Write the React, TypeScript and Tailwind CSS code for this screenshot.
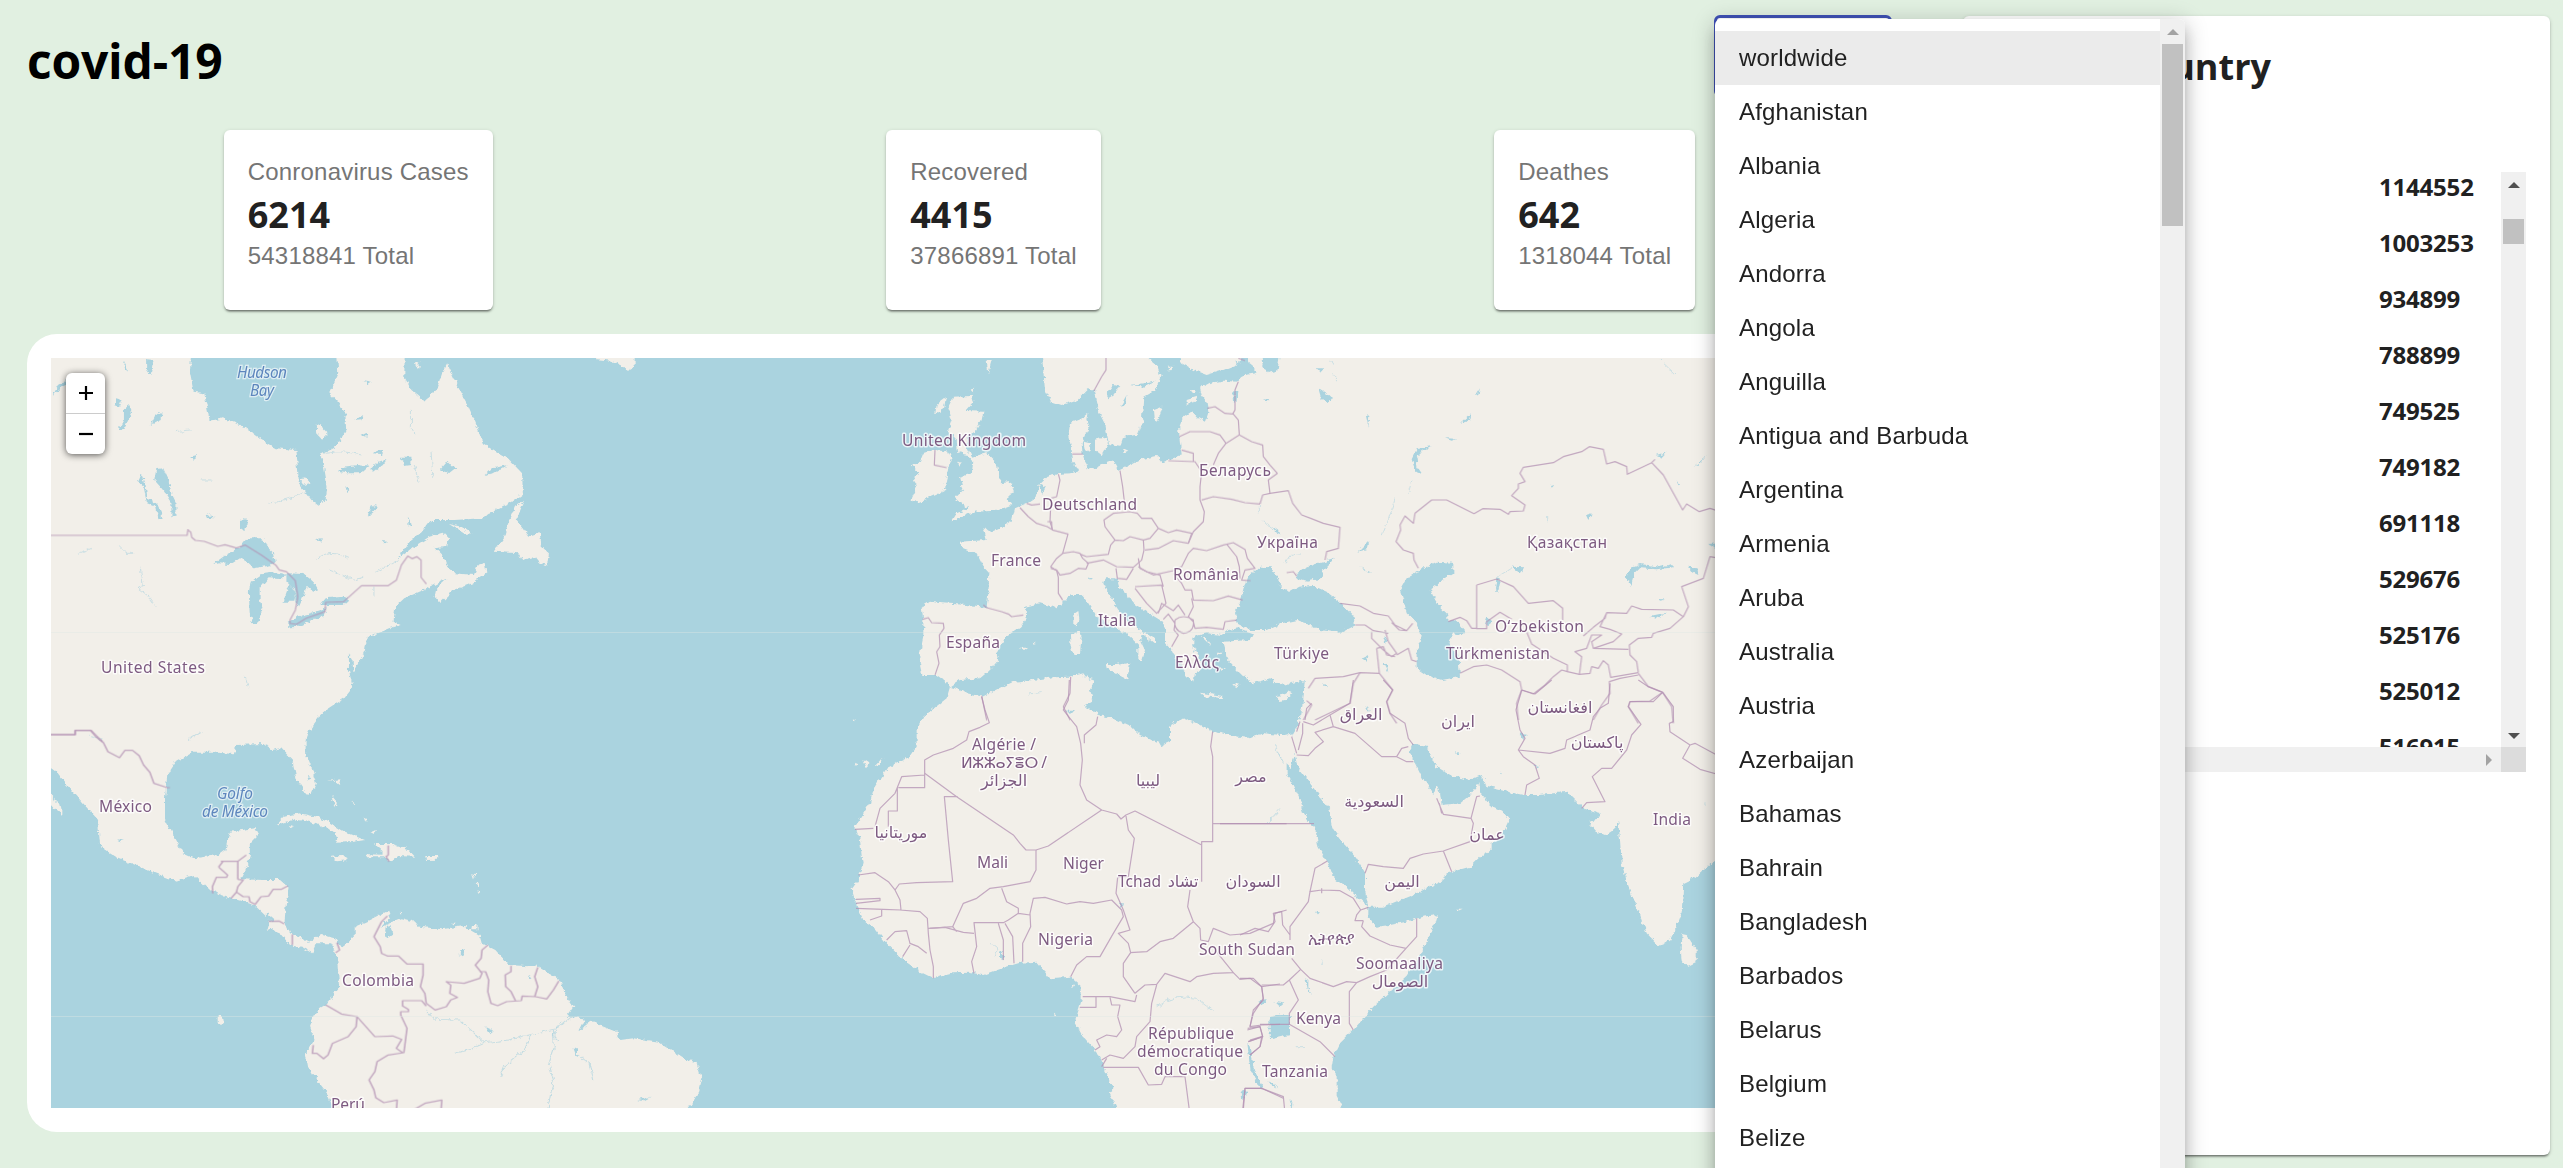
import React from "react";

const countries = [
  "worldwide", "Afghanistan", "Albania", "Algeria", "Andorra", "Angola", "Anguilla",
  "Antigua and Barbuda", "Argentina", "Armenia", "Aruba", "Australia", "Austria",
  "Azerbaijan", "Bahamas", "Bahrain", "Bangladesh", "Barbados", "Belarus", "Belgium",
  "Belize",
];

const cases = [
  "1144552", "1003253", "934899", "788899", "749525", "749182",
  "691118", "529676", "525176", "525012", "516915",
];

const stats = [
  { title: "Conronavirus Cases", today: "6214", total: "54318841 Total" },
  { title: "Recovered", today: "4415", total: "37866891 Total" },
  { title: "Deathes", today: "642", total: "1318044 Total" },
];

type Region = { at: string; land: string[]; water: string[]; borders: string[]; streams?: string[] };

const northAmerica: Region = {
  at: "translate(40 340) scale(.35714 .33333)",
  land: [
    "M-20 0H425L420 100 430 155 460 160 475 242 515 235 570 260 620 300 660 325 718 330 722 380 725 430 760 480 780 497 800 480 805 440 795 380 785 345 830 320 857 270 855 215 830 180 810 160 835 100 830 0H1022L1020 110 1040 150 1075 182 1110 150 1125 100 1140 70 1165 130 1200 200 1220 250 1240 310 1310 355 1350 400 1352 460 1320 485 1280 505 1240 535 1160 540 1095 540 1070 575 1030 610 1000 660 1040 625 1090 590 1130 578 1145 595 1140 620 1105 625 1130 650 1140 680 1160 700 1215 705 1225 675 1245 668 1250 700 1210 730 1160 750 1120 790 1105 770 1110 745 1140 715 1085 745 1020 775 995 800 990 845 1010 855 980 865 935 885 915 895 910 930 890 975 878 1000 875 960 865 940 865 990 875 1040 850 1075 800 1110 760 1150 740 1210H-20Z",
    "M1355 485L1330 500 1310 550 1300 590 1270 635 1340 640 1350 660 1385 650 1400 670 1420 675 1425 640 1405 620 1400 580 1370 590 1350 560 1335 540 1345 510Z",
    "M1145 552L1180 560 1208 580 1190 582Z",
    "M1530 0H1665V80L1645 92 1630 78 1600 62 1560 58Z",
    "M1050 70L1062 66 1058 88Z",
    "M728 418L745 415 758 430 740 434Z",
    "M775 250L790 262 805 280 790 296 776 280Z",
  ],
  water: [
    "M325 388L345 385 360 420 368 460 382 490 382 530 368 532 368 490 345 450 320 420Z",
    "M285 400L295 430 300 470 325 490 335 500 342 535 332 538 325 500 300 490 290 440 275 425Z",
    "M560 540L575 538 582 555 572 570 560 562Z",
    "M485 672L520 645 560 620 580 595 625 595 635 620 655 640 660 665 650 675 600 685 580 665 560 655 535 672 500 670Z",
    "M585 755L590 725 620 703 660 697 690 705 680 715 640 712 615 745 615 780 625 810 612 850 595 853 587 820Z",
    "M690 700L740 702 765 725 778 750 765 755 745 735 740 765 725 800 715 790 715 750 690 725Z",
    "M682 785L700 730 715 760 712 785Z",
    "M695 850L720 830 760 820 800 805 795 825 760 840 725 860 700 862Z",
    "M785 795L800 775 850 770 865 780 850 795Z",
    "M220 270L235 240 235 205 250 195 258 215 245 245 232 270Z",
    "M35 165L50 135 90 110 120 100 100 120 60 145Z",
    "M300 58L318 60 310 105 300 90Z", "M235 62L250 95 238 85Z", "M210 175L228 180 222 200 210 195Z",
    "M310 255L322 230 340 215 338 240Z",
    "M835 395L850 380 890 375 920 380 900 400 860 400Z",
    "M925 385L945 365 970 360 960 375 935 395Z", "M930 340L960 328 955 342Z",
    "M1010 350L1040 350 1040 375 1020 378Z", "M1120 390L1140 365 1150 375 1168 380 1145 400Z",
    "M1245 405L1265 385 1310 375 1270 400Z", "M918 530L925 500 945 492 935 515Z",
    "M900 285L912 278 915 290Z", "M880 240L905 222 900 238Z", "M900 122L930 128 918 130Z",
    "M1030 530L1040 550 1032 560Z", "M770 597L790 595 785 605Z", "M855 435L866 450 860 460Z", "M957 600L972 602 965 610Z",
    "M420 350L440 345 430 362Z", "M465 520L490 535 470 534Z",
  ],
  borders: [
    "M20 586H412L414 570 422 576 425 592 435 601 460 604 498 619 518 614 550 624 575 615 620 645 660 675 670 690 690 695 715 722 722 770 715 810 700 840 700 850 718 853 745 835 798 815 800 787 850 785 900 737 975 737 998 720 1012 675 1030 648 1042 656 1055 650 1067 660 1067 712 1082 732",
    "M20 1184H98V1171H143L175 1205",
  ],
  streams: [
    "M280 680L290 740 275 745 300 765 325 803", "M220 618L240 640 265 640", "M108 640L145 625",
    "M935 740V770", "M940 697L1000 660", "M1040 210V260L1050 280", "M1045 375L1062 425", "M1095 335L1100 410",
    "M775 655Q815 625 865 655", "M810 690L880 720 905 712", "M640 490Q700 480 740 455", "M575 1010L585 1045",
    "M800 340Q850 330 900 345", "M450 420H480", "M380 275L420 270",
  ],
};

const centralAmerica: Region = {
  at: "translate(40 720) scale(.44643 .33333)",
  land: [
    "M-10 -10H625L595 45 595 100 610 150 618 190 608 222 595 220 575 180 565 120 540 85 520 90 500 72 440 75 435 100 400 95 345 95 305 125 285 165 280 230 280 300 300 350 320 400 345 415 400 405 415 390 425 335 480 325 488 345 470 370 470 410 460 450 450 478 500 480 540 480 557 500 550 560 548 605 560 640 600 665 630 645 660 655 675 685 705 650 705 620 740 600 780 572 785 590 765 620 810 595 840 605 850 620 900 628 950 618 985 645 990 670 1020 690 1050 735 1115 740 1170 785 1175 820 1195 860 1180 890 1220 895 1205 935 1235 905 1290 935 1300 960 1330 955 1385 965 1450 1020 1470 1025 1483 1080 1475 1120 1440 1190H665L640 1110 600 1040 595 1000 615 960 605 920 620 870 645 850 670 800 668 760 665 705 650 670 620 670 610 700 590 685 560 675 545 645 510 625 515 600 480 555 430 535 385 515 345 465 305 482 250 455 170 410 135 380 130 300 90 240 60 195 40 160 25 145-10 130Z",
    "M20 205L35 245 50 260 50 285 30 265 15 240Z",
    "M528 315L545 290 580 280 620 290 650 310 680 335 728 360 700 366 665 368 670 350 640 320 600 305 570 298Z",
    "M748 372L790 372 825 388 840 410 800 408 785 425 770 412 728 412 735 403 765 404 765 390Z",
    "M652 410L675 408 690 420 665 424Z", "M863 408H892V419L865 420Z", "M560 315L568 318 564 328Z",
    "M652 225L665 245 662 262Z", "M640 182L675 178 672 195 660 182Z", "M968 615H980V628H966Z",
    "M398 885L410 890 412 910 398 912Z", "M738 338L752 330 750 342Z", "M968 460L975 462 972 475Z",
    "M976 485L984 487 980 500Z", "M980 510L986 515 982 522Z", "M806 578L812 580 810 588Z",
    "M698 240L706 255 702 258Z", "M725 290L732 300 728 304Z", "M920 608L934 608 926 614Z",
  ],
  water: [
    "M775 620L785 618 790 645 780 655 772 640Z", "M942 690L952 688 948 712 940 708Z",
    "M508 580L525 600 518 605 508 592Z", "M598 168L606 172 602 182Z", "M170 358L188 360 180 364Z",
    "M1195 985L1203 990 1202 1010Z", "M1340 1140L1368 1130 1350 1144Z", "M1095 765L1102 770 1096 776Z",
    "M995 920L1015 932 1008 940Z",
  ],
  borders: [
    "M-10 44H79V31H113L125 50 142 68 152 95 178 113 190 91 207 91 222 107 232 135 246 157 255 190 285 203H291",
    "M405 424H443M443 424V478M443 424L462 405M400 441L410 424M400 441L420 465 418 472H395L386 500 387 520M443 478L455 480 443 500 440 516 428 535",
    "M440 516L455 530 468 530 470 545 482 553 495 530 512 528 522 508 540 508 555 498",
    "M512 604L535 603 547 612M565 643V675M665 668L671 690 662 698",
    "M780 376V405L775 410 782 425",
    "M778 588L765 605 748 650 762 680 765 700 778 708H803L822 732H858V765L852 800 862 820 865 850 885 870 910 860 920 840 935 832 918 820 920 795 910 785 950 790 985 775 990 760 975 735 988 715 990 690 1003 675",
    "M985 755H998L1005 780 1003 815 1010 850 1025 857 1045 845 1078 842 1080 828 1110 830 1135 837 1150 810 1162 783",
    "M1055 738V755L1042 765 1043 800 1055 815 1065 842M1115 742L1108 770 1115 800 1108 830",
    "M640 855L675 882 710 890 708 920 690 950 655 970 645 1005 635 1016 620 1000H610L612 975M710 890L750 950 790 948 810 958 798 985 812 998M865 858L855 842H812L812 858 825 868 825 875H808L808 885 822 925 815 998 780 1005 755 1025 750 1055 737 1080 748 1110 752 1133 770 1148 800 1140 798 1175M830 1175L862 1150 900 1140 898 1175",
  ],
  streams: [
    "M865 870L880 898 940 900 965 930 995 968 1050 960 1110 940 1160 925 1195 885", "M1150 930L1152 985 1140 1030 1150 1080 1138 1163",
    "M930 1000L960 990 995 970", "M1100 945L1085 990 1040 1040 1032 1070", "M1165 905L1150 945 1160 960",
    "M1200 1000L1230 1030 1238 1080", "M330 60L360 35", "M110 45L140 60",
  ],
};

const europe: Region = {
  at: "translate(840 340) scale(.33333)",
  land: [
    "M1460 0H1220V54L1235 80 1250 95 1215 100 1190 125 1150 122 1110 128 1080 145 1085 165 1100 185 1105 215 1095 245 1075 235 1055 212 1030 230 1018 260 1018 290 1022 325 1025 345 985 360 965 368 950 348 905 358 870 375 850 385 835 392 820 362 790 372 765 385 740 385 728 345 725 310 735 285 748 260 742 240 745 218 722 238 690 250 685 290 695 330 700 365 715 395 690 400 655 402 620 410 600 430 590 470 560 490 525 505 515 545 490 560 470 570 445 575 430 560 440 600 405 602 360 605 370 625 410 640 430 680 448 700 445 760 440 800 380 795 310 790 270 785 245 800 250 840 250 890 238 950 250 1005 290 1005 310 1020 330 1040 360 1020 420 1015 450 990 475 960 470 940 495 890 540 860 560 835 555 800 600 790 650 805 690 765 725 765 745 790 770 830 800 850 840 870 870 890 895 915 895 960 905 965 915 930 900 900 905 880 945 912 945 897 900 870 870 850 830 810 820 780 800 755 790 730 800 715 828 715 835 740 860 760 880 790 920 815 960 840 975 865 975 910 1000 935 1010 960 1030 985 1040 1010 1060 1025 1065 1000 1085 990 1080 960 1060 920 1060 890 1100 880 1145 885 1165 870 1195 865 1240 880 1230 900 1150 905 1165 960 1200 1000 1240 1030 1290 1015 1330 1035 1395 1020H1460Z",
    "M600 0L608 70 615 150 635 185 665 195 710 180 745 145 762 150 770 200 795 250 808 315 840 320 850 290 890 285 905 250 910 170 945 150 962 110 950 75 925 54V0Z",
    "M1010 0L1025 70 1060 90 1100 105 1150 90 1200 70 1215 0Z",
    "M340 170L395 168 400 185 375 213 430 215 425 240 405 275 385 285 380 320 395 350 440 340 470 370 475 400 485 430 510 425 522 445 500 480 515 495 470 512 400 515 380 525 335 545 350 520 385 505 345 475 370 450 360 410 395 400 400 365 385 345 355 340 350 300 325 270 335 240 325 200Z",
    "M215 375L240 365 250 340 285 330 325 335 335 355 325 380 320 410 315 450 285 465 235 487 212 480 230 440 220 410 240 400Z",
    "M300 185L318 172 312 205 285 225 290 195Z", "M440 60L455 60 445 100Z", "M392 150L402 140 402 160Z",
    "M700 820L715 810 718 840 710 862 700 850Z", "M690 885L715 870 725 885 720 940 700 945 692 920Z",
    "M798 975L830 975 870 968 862 1018 830 1000 800 985Z", "M1080 1058L1150 1068 1148 1075 1090 1068Z",
    "M1308 1070L1330 1065 1358 1050 1335 1080 1315 1082Z", "M942 210L968 200 955 240 945 245Z", "M900 235L912 240 898 275Z",
    "M730 305L750 310 752 335 735 330Z", "M765 300L798 290 805 310 785 345 765 330Z", "M850 325L865 332 850 338Z",
    "M1040 180L1072 170 1065 185 1040 192Z", "M1050 150L1068 150 1055 162Z", "M980 80L1000 80 990 92Z",
    "M540 920L565 920 550 932Z", "M575 908L588 912 578 915Z", "M355 365L366 368 358 380Z",
    "M1085 890L1100 895 1115 915 1100 905Z", "M1130 935L1145 935 1135 945Z", "M1140 980L1158 985 1145 990Z",
    "M1110 965L1120 975 1112 980Z", "M1180 1030L1200 1035 1188 1045Z", "M1100 940L1110 950 1100 952Z",
    "M1060 950L1085 970 1080 985Z",
  ],
  water: [
    "M798 165L820 135 838 140 820 165 805 175Z", "M840 200L860 165 855 195Z", "M870 135L945 125 915 140Z",
    "M1180 150L1192 150 1190 185 1182 188Z", "M1270 180L1285 180 1280 190Z", "M600 430L618 440 605 465Z",
    "M675 1112L705 1112 700 1118Z", "M745 710L755 712 750 720Z",
  ],
  borders: [
    "M798 40V90L785 110 762 152",
    "M285 330L283 375 320 383M248 838L265 833 275 848 310 850 312 865 298 885 300 920 290 935 297 970 285 1005",
    "M430 795L440 803 485 815 505 822 515 830 550 825M655 402L660 420 650 470 633 475 630 545 638 570 684 582 668 640 650 655 632 680 650 692 655 712 655 760 668 780",
    "M560 490L575 495 600 492M540 503L565 530 590 550 622 560 638 570M622 545L635 545 636 570",
    "M632 685L650 690 660 705 690 700 715 685 738 687 745 670 728 655 720 640 700 635 668 640",
    "M720 642L740 650 805 643 812 615 825 600 795 560 792 540 820 520 870 515 892 520 905 535 935 535 955 565 930 595 910 600 870 590 850 602 825 600",
    "M840 392L848 440 852 475 855 490M740 670L790 660 830 680 880 682 905 660 912 630 910 600",
    "M955 565L985 578 1010 570 1055 580 1045 610 1000 602 955 625 915 630M895 655L900 685 940 705 1000 692 1025 680 1045 640 1060 625 1100 632 1150 615 1180 608 1215 628 1222 655 1245 685 1215 690 1205 720 1232 722",
    "M1160 612L1190 650 1198 680 1200 715M1045 610L1060 575 1090 545 1093 515 1080 480 1080 440 1085 395 1065 365 985 362M1060 365L1060 340 1025 330",
    "M1085 480L1120 470 1175 478 1215 488 1260 492M1018 290L1050 275 1110 275 1140 285 1158 310 1135 340 1120 375",
    "M1158 310L1198 285 1195 240 1180 222 1155 220 1125 200 1102 205M1195 125L1185 150 1185 210 1178 222",
    "M828 685L832 715 860 718 880 685M885 740L965 735 978 790 950 820 920 790 885 745M895 680L920 695 960 705 970 740M1000 700L1025 730 1035 750 1055 750 1060 780 1120 782 1165 768 1208 780",
    "M1055 775L1060 800 1045 830 1060 845 1065 865 1100 862 1150 868 1155 845 1190 840M1005 840Q1030 820 1060 840Q1065 875 1030 880Q1000 870 1005 840M955 820L965 790 1000 812 1015 795 1035 825M970 838L985 822 1005 850 1002 870 1015 885 995 920",
    "M1195 54L1215 62M692 1010L690 1060 670 1100 690 1140M425 1068L440 1140M697 342H728M1198 285L1235 305 1268 315 1270 350 1290 375 1312 400 1285 420 1290 460",
    "M1340 698L1360 695 1370 708",
  ],
};

const asia: Region = {
  at: "translate(1240 340) scale(.33333)",
  land: ["M100 0H1560V1160H190L200 1080 205 1015 160 1025 100 1030Z"],
  water: [
    "M62 30H122L112 92 80 100 68 75Z", "M-10 60L15 85 48 100 0 108Z", "M230 85L250 85 240 95Z",
    "M235 145L262 162 275 175 265 190 245 180Z", "M378 228L388 225 385 260Z", "M70 178L88 180 80 190Z",
    "M515 355L530 325 575 318 545 335 530 355 532 380 545 400 530 402Z", "M615 295L650 296 635 302Z",
    "M705 168L720 145 715 165Z", "M660 252L695 220 690 240Z", "M355 635L385 605 380 628Z", "M360 682L395 698 380 695Z",
    "M-15 815L0 790 10 750 20 715 60 680 95 682 110 712 130 740 150 755 175 740 215 735 260 755 310 795 340 825 345 855 300 878 240 870 200 850 170 840 120 850 80 870 30 870-10 850Z",
    "M165 705L200 680 245 665 285 653 250 690 245 715 200 725 175 718Z",
    "M540 690L590 665 640 668 640 700 600 725 570 745 580 770 600 800 625 825 625 845 650 840 675 870 665 885 640 880 625 905 655 945 660 1010 605 1020 560 1005 530 985 530 930 545 890 530 850 500 820 490 780 480 750 500 715Z",
    "M1160 710L1175 680 1200 672 1260 680 1300 672 1305 682 1250 688 1200 685 1180 705 1175 738Z",
    "M1345 680L1372 682 1375 705 1355 695Z", "M1230 828L1278 818 1255 835Z", "M768 752L772 715 782 720 775 752Z",
    "M815 680L850 682 838 698Z", "M735 850L742 830 758 845 745 855Z", "M365 955L385 945 380 965Z",
    "M430 970L440 968 445 998Z", "M1038 525L1055 520 1045 540Z", "M1250 345L1280 335 1265 352Z", "M1357 382L1405 345 1380 368Z",
    "M1250 777L1275 778 1262 782Z", "M1310 420L1322 432 1316 436Z", "M100 565L125 582 110 580Z", "M430 890L442 900 436 908Z",
    "M250 1030L265 1045 250 1040Z", "M930 435L940 432 932 442Z", "M1405 612L1440 610 1430 630Z",
  ],
  borders: [
    "M60 492L68 465 90 460 145 452 158 490 185 525 212 535 250 550 300 562 295 625 260 635 255 660",
    "M300 790L360 798 400 820 445 828 465 855 500 872 518 850M345 855H375L400 872 445 880M395 875V895L430 930 455 950 470 940 445 905 435 870M455 848L478 870 500 872M470 945L505 925 515 960 530 965M410 925L418 1000 360 998 310 1010 225 1015 205 1045M410 925L430 920 440 945 465 950",
    "M535 685L522 660 520 640 490 630 468 605 482 570 480 555 495 528 520 550 525 520 575 480H620L702 521 728 506 780 508 805 523 810 515 850 513 855 495 815 467 835 445 835 432 855 425 840 400 850 382 940 368 970 350 1025 335 1048 320 1090 328 1100 372 1125 365 1160 380 1162 403 1235 368 1270 405 1328 510 1340 492 1378 515 1410 505 1440 515",
    "M1245 358L1235 368M1440 655L1410 650 1390 715 1325 740 1345 800 1330 830 1290 865 1240 880 1235 892 1195 895 1168 915 1170 945 1190 965 1195 998",
    "M1330 830L1300 810 1205 808 1175 798 1160 820 1100 818 1095 835 1060 862 1030 888M1100 818L1080 860 1110 868 1145 882 1120 905 1060 925 1055 905 1085 885 1055 885 1040 925 1005 935 1025 950 1018 1005M1165 928L1060 925",
    "M710 735L770 717 820 740 865 790 940 782 968 805V840M710 735V866H740V845L780 817 815 838M860 875L875 912 940 955 982 975V995L965 990 940 1010 915 1035 880 1062 845 1050",
    "M625 845L660 832 680 842 695 865H710M660 1000L700 980 740 975 785 990 840 1025 845 1050 830 1090 835 1140",
    "M982 995L1018 1003 1050 1000 1055 980 1075 985 1090 962 1105 975 1112 1012 1195 998",
    "M1195 1005L1140 1015 1108 1025 1110 1060 1085 1095 1060 1140M1195 1000L1225 1040 1268 1057 1230 1083 1170 1085 1165 1100 1195 1150M1268 1057L1295 1100 1300 1150",
    "M418 1000L458 1050 440 1085 450 1120 470 1150M360 998L340 1030 330 1090 225 1140M190 1140L215 1095 200 1082",
  ],
  streams: ["M515 425L505 458", "M465 475L445 540 425 590", "M58 495V520M65 540L120 580", "M135 670L155 645 180 642", "M775 710L815 685", "M1260 60L1305 102", "M270 60L280 75M275 100L292 122", "M920 530V550"],
};

const africa: Region = {
  at: "translate(820 680) scale(.33333)",
  land: [
    "M390 20L380 55 310 110 290 150 290 200 270 230 205 260 160 330 150 370 105 440 120 480 128 550 115 600 95 628 108 670 130 720 160 740 200 790 250 840 300 875 340 895 400 880 450 878 490 885 560 860 600 848 650 845 690 895 750 890 785 920 785 960 765 1025 790 1070 830 1115 850 1160 880 1230 870 1240 900 1310H1400V165H1380L1330 160 1285 178 1230 165 1180 155 1120 125 1090 115 1050 140 1050 185 1030 195 960 165 935 140 890 120 835 105 810 90 795 75 820 60 810 30 820-5 805 0 790-20 750-10 700-8 640 0 580 5 540 25 490 50 440 40 405 25Z",
    "M130 240L145 250 140 265Z", "M165 258L190 230 180 255Z", "M105 245L115 250 108 258Z", "M95 118L105 120 100 124Z", "M752 920L762 912 765 918Z", "M702 998L710 1002 704 1008Z",
  ],
  water: ["M735 92L765 94 750 98Z", "M540 815L548 810 550 838 540 835Z", "M1350 1010L1410 1005V1065L1352 1078Z", "M1318 960L1340 958 1325 975Z", "M1283 1090L1292 1100 1300 1160 1328 1225 1320 1225 1292 1170Z", "M1262 1250L1275 1230 1280 1235 1268 1260Z", "M900 668L912 670 905 682Z"],
  borders: [
    "M485 50L495 90 508 128 480 142 447 155 440 180 400 205 340 225 314 240V323H235M314 285L245 290 225 340 180 385 165 440M232 323V393H205V440M105 448L160 445",
    "M314 280L410 350 580 465 600 490 618 510H648L685 498 845 390M413 350H373L385 480 398 605 290 608 238 612 225 630",
    "M748 0L745 60 730 90 770 140 782 190 787 240 780 315 800 360 845 390 890 402 903 417 918 405 945 393 1145 495V605M1178 155L1172 200 1178 230V485H1145V495M1178 431H1400",
    "M833 110L828 135 793 165V190M648 510V570L630 605 550 620 510 625 470 655 430 670 398 740 330 745M918 408L925 450 943 475 925 590 893 592 888 640 910 690 930 750 895 760 925 790 932 818 910 850V890L945 940",
    "M115 585L165 578 205 605 225 630 240 660 243 690 190 688 108 685M108 658L180 655V662L108 670M150 720L185 708V690M240 690L300 695 322 715 325 760 330 810 340 860V895M325 745L375 742 430 757 462 760M398 740L410 755M200 780L225 755 260 752 270 790 295 800 320 820M270 795L248 830",
    "M462 880L455 845 470 800 462 728H550L565 720 595 700 630 705M545 625L560 665 595 685 595 700M535 730L550 780 550 840M555 730L578 770 582 850M630 700L632 740 608 790V845M630 700L640 655 675 652 740 672 780 665 820 670 875 660 905 690 910 710 880 760 840 830 800 830 770 855 752 890",
    "M930 818L980 815 1020 785 1060 775 1120 725 1140 745 1142 780 1165 785 1180 745 1230 765 1290 760 1360 730 1365 700 1400 690M1110 630L1103 680 1120 725M945 940L975 915 1010 913 1035 880 1110 905 1130 890 1180 880 1240 878 1185 810",
    "M1240 878L1260 898 1290 895 1325 920 1380 912M1325 920L1330 955 1300 1000 1290 1040 1325 1035 1380 1033M1290 1080L1325 1070 1320 1100 1290 1125M1283 1045L1320 1040 1328 1070 1285 1085",
    "M788 950H870L945 965 950 945M828 952V982H780M870 952L875 975 900 975 893 1010 905 1050 890 1070 860 1065 830 1080 840 1100 825 1110M1010 915L995 970 990 1025 950 1070 945 1100 910 1135 870 1125 845 1140M850 1162H955L985 1215 1025 1213 1035 1190H1095L1108 1290M1268 1290L1275 1225 1325 1225 1390 1255",
    "M845 1160L860 1135",
  ],
  streams: ["M1365 195L1390 250", "M510 790L535 810 525 830", "M1335 435L1375 400", "M1010 980Q1060 940 1130 955L1180 995", "M1350 1205L1370 1225", "M625 42L665 38"],
};

const arabia: Region = {
  at: "translate(1240 680) scale(.33333)",
  land: [
    "M195-10L190 60 180 110 170 145 155 170 163 215 172 260 210 310 240 350 270 390 275 440 310 490 345 530 375 580 375 630 385 680 430 680 480 660 530 640 610 600 620 580 690 560 720 530 755 510 755 490 790 460 808 420 790 395 750 375 725 345 718 310 690 345 660 370 605 375 600 340 590 318 580 345 565 320 545 290 525 250 510 210 520 190 560 200 590 260 640 290 690 300 725 285 740 320 780 330 850 345 900 345 980 335 1000 355 1030 385 1055 405 1085 400 1070 420 1045 425 1070 455 1095 465 1125 445 1135 425 1140 480 1145 550 1165 620 1200 700 1220 760 1260 800 1290 780 1310 740 1325 700 1330 610 1370 590 1430 535 1560 530V-10Z",
    "M-100 170H0L30 175 70 160 110 172 158 160 165 215 155 265 130 240 106 205 115 235 140 280 155 305 180 360 200 420 225 440 235 500 265 550 280 590 320 620 350 650 385 680 385 710 410 740 450 735 500 725 550 710 590 705 580 740 560 790 530 840 500 890 440 945 400 980 340 1050 300 1090 280 1130 275 1165 290 1180 290 1250 320 1310H-100Z",
    "M1325 762L1340 765 1370 810 1370 845 1345 857 1325 845 1322 800Z", "M645 686L668 686 655 692Z",
    "M108 48L130 45 158 35 135 60 115 62Z",
  ],
  water: [
    "M88 1020L110 1003 145 1010 150 1050 120 1065 90 1078Z", "M55 968L80 958 65 975Z", "M105 965L130 970 118 978Z", "M196 895L205 900 205 925 215 942 205 935Z",
    "M22 1090L32 1100 40 1160 68 1225 60 1225 32 1170Z", "M85 1200L105 1215 115 1225 95 1215Z", "M148 1258L160 1270 158 1290Z", "M5 1240L15 1230 12 1260Z",
    "M225 695L240 697 232 705Z", "M838 160L860 165 850 180Z", "M380 75L390 95 380 88Z", "M880 255L900 257 888 263Z", "M1030 385L1085 400 1060 415Z",
    "M780 272L790 275 784 280Z", "M645 208L662 222 652 222Z",
  ],
  borders: [
    "M190 125L220 135 270 105 330 70 340 0M270 105L280 140 345 160 425 230H470L500 245H520M470 230L485 205 505 200M280 140L225 157 250 185 225 205 205 227 170 225M188 130V160L175 210M170 155L180 125M155 170L170 220",
    "M215 70L200 85 195 120M430 0L458 30 440 65 450 100 495 130 505 175 520 195M375 580L385 553 430 560 490 565 510 535 550 522 610 513 690 485 700 430 693 415 610 403 590 355M610 513L635 575M693 415L710 350 720 348M598 370L605 400",
    "M835 210L850 230 885 255 898 295 860 315 855 345M845 30L828 90 840 150 855 175 835 210 930 220 975 205 980 180 1050 150 1060 110 1080 85 1105 70 1110 10M845 30L885 42 935 0M1268 37L1240 65 1170 65 1165 80 1203 133 1175 165 1160 210 1115 265H1085L1057 290 1095 365 1040 368 1025 385",
    "M1195 0L1225 20 1268 37 1300 80 1300 125 1288 130 1290 155 1350 195 1365 190 1440 230M1350 195L1328 235 1380 268 1440 285",
    "M-60 431H222M262 543L225 565 210 635 245 630 300 632 340 655 362 690 350 705 345 722H370M210 635L205 665 150 740 150 780M245 625L245 640M362 690L385 682M370 722L365 740 390 768 450 795 498 805 530 770V715M498 805L440 870 390 890 350 908 320 905 280 920 210 895 182 868 155 835M182 868L148 900 130 915 65 915M148 900L175 960 148 1000V1035M350 908L328 935V1030L340 1050M60 1033H148L240 1085 285 1130M0 765L45 745 85 755 105 725 100 700 125 695 128 735 150 765M0 895L40 895 65 920 70 960 40 990 30 1040M22 1050L60 1040 68 1070 25 1085M68 1070L60 1100 30 1125M10 1290L15 1225 65 1225 130 1250 135 1300",
  ],
  streams: ["M105 205L130 245M78 435L120 385", "M90 1205L110 1222", "M168 1100H195", "M245 855L250 840", "M1395 370V375"],
};

const regions: Region[] = [northAmerica, centralAmerica, europe, asia, africa, arabia];

// [text, left, baseline, width]
const labels: [string, number, number, number][] = [
  ["United States", 101, 673, 104],
  ["México", 99, 812, 53],
  ["Colombia", 342, 986, 72],
  ["Perú", 331, 1110, 34],
  ["United Kingdom", 902, 446, 124],
  ["Deutschland", 1042, 510, 95],
  ["France", 991, 566, 50],
  ["España", 946, 648, 54],
  ["Italia", 1098, 626, 38],
  ["România", 1173, 580, 66],
  ["Беларусь", 1199, 476, 72],
  ["Україна", 1257, 548, 61],
  ["Ελλάς", 1175, 668, 44],
  ["Türkiye", 1274, 659, 55],
  ["Қазақстан", 1527, 548, 80],
  ["Oʻzbekiston", 1495, 632, 89],
  ["Türkmenistan", 1446, 659, 104],
  ["Algérie /", 972, 750, 64],
  ["Mali", 977, 868, 31],
  ["Niger", 1063, 869, 41],
  ["Tchad", 1118, 887, 43],
  ["Nigeria", 1038, 945, 55],
  ["South Sudan", 1199, 955, 96],
  ["République", 1148, 1039, 86],
  ["démocratique", 1137, 1057, 106],
  ["du Congo", 1154, 1075, 73],
  ["Tanzania", 1262, 1077, 66],
  ["Kenya", 1296, 1024, 45],
  ["Soomaaliya", 1356, 969, 87],
  ["India", 1653, 825, 38],
  ["ⵍⵣⵣⴰⵢⴻⵔ /", 961, 768, 86],
  ["ኢትዮጵያ", 1308, 944, 47],
];

// [text, centre, baseline]
const arabicLabels: [string, number, number][] = [
  ["الجزائر", 1004, 786], ["ليبيا", 1148, 786], ["مصر", 1251, 782], ["موريتانيا", 901, 838],
  ["تشاد", 1183, 887], ["السودان", 1253, 887], ["العراق", 1361, 720], ["ايران", 1458, 727],
  ["افغانستان", 1560, 713], ["پاکستان", 1597, 748], ["السعودية", 1374, 807], ["عمان", 1487, 840],
  ["اليمن", 1402, 887], ["الصومال", 1400, 987],
];

const waterLabels: [string, number, number, number][] = [
  ["Hudson", 237, 378, 50],
  ["Bay", 250, 396, 24],
  ["Golfo", 217, 799, 36],
  ["de México", 202, 817, 66],
];

function WorldMap() {
  return (
    <svg className="block h-[750px] w-[1817px] bg-[#aad3df]" viewBox="51 358 1817 750">
      <defs>
        <filter id="coast" filterUnits="userSpaceOnUse" x="0" y="300" width="1900" height="870">
          <feTurbulence type="fractalNoise" baseFrequency="0.2" numOctaves="3" seed="4" />
          <feDisplacementMap in="SourceGraphic" scale="5.5" xChannelSelector="R" yChannelSelector="G" />
        </filter>
      </defs>
      <g filter="url(#coast)">
        {regions.map((r, i) => (
          <g key={i} transform={r.at} fill="#f2efe9">
            {r.land.map((d, j) => <path key={j} d={d} />)}
          </g>
        ))}
        {regions.map((r, i) => (
          <g key={i} transform={r.at} fill="#aad3df">
            {r.water.map((d, j) => <path key={j} d={d} />)}
            {r.streams?.map((d, j) => <path key={j} d={d} fill="none" stroke="#aad3df" strokeWidth="2.5" opacity=".65" />)}
          </g>
        ))}
        <path d="M1277 577l8-5 12 3-2 10-6 7-8-6z" fill="#f2efe9" />
      </g>
      {regions.map((r, i) => (
        <g key={i} transform={r.at} fill="none" stroke="#b391b3" strokeWidth="3.6" strokeLinejoin="round" opacity=".75">
          {r.borders.map((d, j) => <path key={j} d={d} />)}
        </g>
      ))}
      <path d="M51 632.5H1868M51 1016.5H1868" stroke="#dfe8e4" strokeWidth="1" opacity=".4" />
      <g fontSize="15.6" fill="#7d5a81" stroke="#fff" strokeWidth="3" strokeOpacity=".75" strokeLinejoin="round" paintOrder="stroke" fontFamily="'Noto Sans','DejaVu Sans',sans-serif">
        {labels.map(([t, x, y, w]) => (
          <text key={t} x={x} y={y} textLength={w}>{t}</text>
        ))}
        {arabicLabels.map(([t, x, y]) => (
          <text key={t} x={x} y={y} textAnchor="middle" fontFamily="'DejaVu Sans',sans-serif" fontSize="16">{t}</text>
        ))}
      </g>
      <g fontSize="15.4" fontStyle="italic" fill="#5d86bd" stroke="#fff" strokeWidth="2.5" strokeOpacity=".6" paintOrder="stroke" fontFamily="'Noto Sans',sans-serif">
        {waterLabels.map(([t, x, y, w]) => (
          <text key={t} x={x} y={y} textLength={w}>{t}</text>
        ))}
      </g>
    </svg>
  );
}

const cardShadow = "shadow-[0_3px_2px_-2px_rgba(0,0,0,0.35),0_2px_2px_rgba(0,0,0,0.2),0_1px_4px_rgba(0,0,0,0.14)]";

function StatCard({ title, today, total }: { title: string; today: string; total: string }) {
  return (
    <div className={`rounded-[6px] bg-white px-6 pt-6 pb-9 ${cardShadow}`}>
      <p className="text-2xl leading-9 tracking-[0.2px] text-[#757575]">{title}</p>
      <h2 className="pt-[2px] font-['Open_Sans',sans-serif] text-4xl leading-[46px] font-bold text-[#212121]">{today}</h2>
      <p className="text-2xl leading-9 tracking-[0.2px] text-[#757575]">{total}</p>
    </div>
  );
}

export default function App() {
  return (
    <div className="relative flex h-[1168px] w-[2563px] overflow-hidden bg-[#e1f0e1] pl-[27px] font-['Liberation_Sans',Arial,sans-serif]">
      <main className="flex w-[1865px] shrink-0 flex-col">
        <header className="flex h-[130px] items-start justify-between pt-[15px]">
          <h1 className="mt-[14px] font-['Open_Sans',sans-serif] text-5xl leading-[64px] font-bold tracking-[-0.2px] text-black">covid-19</h1>
          <div className="h-[82px] w-[178px] rounded-[6px] border-[3px] border-[#3f51b5] bg-white" />
        </header>
        <section className="flex h-[180px] justify-around">
          {stats.map((s) => <StatCard key={s.title} {...s} />)}
        </section>
        <section className="relative mt-6 h-[798px] rounded-[30px] bg-white p-6">
          <WorldMap />
          <div className="absolute top-[39px] left-[39px] flex w-[39px] flex-col rounded-[6px] bg-white shadow-[0_1px_7px_rgba(0,0,0,0.65)]">
            <button className="flex h-[41px] items-center justify-center border-b border-[#ccc]">
              <svg className="h-4 w-4" viewBox="0 0 16 16"><path d="M8 1v14M1 8h14" stroke="#000" strokeWidth="2.2" /></svg>
            </button>
            <button className="flex h-10 items-center justify-center">
              <svg className="h-4 w-4" viewBox="0 0 16 16"><path d="M1 8h14" stroke="#000" strokeWidth="2.2" /></svg>
            </button>
          </div>
        </section>
      </main>

      <aside className={`mt-4 ml-[71px] flex h-[1139px] w-[587px] flex-col rounded-[6px] bg-white px-6 ${cardShadow}`}>
        <h2 className="mt-[27px] w-[284px] text-right font-['Open_Sans',sans-serif] text-4xl leading-[48px] font-bold text-[#212121]">Country</h2>
        <div className="mt-[81px] grid h-[600px] grid-cols-[514px_25px] grid-rows-[575px_25px]">
          <ul className="overflow-hidden pl-[392px] font-['Open_Sans',sans-serif] text-2xl font-bold text-[#212121]">
            {cases.map((c) => <li key={c} className="-mt-[13px] mb-[13px] h-[56px] leading-[56px] tracking-[-0.2px]">{c}</li>)}
          </ul>
          <div className="flex flex-col items-center justify-between bg-[#f0f0f0] pt-[10px] pb-2">
            <div className="flex flex-col items-center">
              <svg className="h-[6px] w-3" viewBox="0 0 12 6"><path d="M0 6 6 0l6 6z" fill="#505050" /></svg>
              <div className="mt-[31px] h-[25px] w-[21px] bg-[#c1c1c1]" />
            </div>
            <svg className="h-[6px] w-3" viewBox="0 0 12 6"><path d="M0 0 6 6l6-6z" fill="#505050" /></svg>
          </div>
          <div className="flex items-center justify-end bg-[#f0f0f0] pr-[9px]">
            <svg className="h-3 w-[6px]" viewBox="0 0 6 12"><path d="M0 0v12l6-6z" fill="#a3a3a3" /></svg>
          </div>
          <div className="bg-[#dcdcdc]" />
        </div>
      </aside>

      <div className="absolute top-[19px] left-[1715px] flex h-[1300px] w-[470px] overflow-hidden rounded-[6px] bg-white shadow-[0_8px_8px_-4px_rgba(0,0,0,0.2),0_12px_15px_1px_rgba(0,0,0,0.14),0_4px_21px_3px_rgba(0,0,0,0.18)]">
        <ul className="flex-1 pt-3 text-2xl tracking-[0.2px] text-[#212121]">
          {countries.map((c, i) => (
            <li key={c} className={i === 0 ? "h-[54px] bg-[#ebebeb] pl-6 leading-[54px]" : "h-[54px] pl-6 leading-[54px]"}>{c}</li>
          ))}
        </ul>
        <div className="flex w-[25px] flex-col items-center bg-[#f0f0f0] pt-[10px]">
          <svg className="h-[6px] w-3" viewBox="0 0 12 6"><path d="M0 6 6 0l6 6z" fill="#a3a3a3" /></svg>
          <div className="mt-[9px] h-[182px] w-[21px] bg-[#c1c1c1]" />
        </div>
      </div>
    </div>
  );
}
